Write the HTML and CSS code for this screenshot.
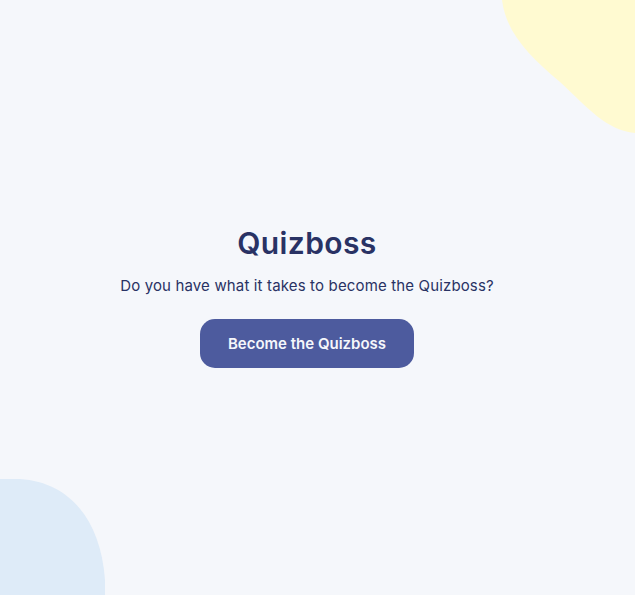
FILE: index.html
```html
<!DOCTYPE html>
<html lang="en">
<head>
<meta charset="utf-8">
<title>Quizboss</title>
<link rel="stylesheet" href="styles.css">
</head>
<body>
<svg class="blob blob-yellow" width="133" height="134" viewBox="502 0 133 134" aria-hidden="true">
  <path d="M502,0 C506,32 528,55 560,82 C588,108 606,130 635,133 L635,0 Z" fill="#FFFAD1"/>
</svg>
<svg class="blob blob-blue" width="106" height="116" viewBox="0 479 106 116" aria-hidden="true">
  <path d="M0,479 L15,479 C62,479 100,512 105,580 L105,595 L0,595 Z" fill="#DEEBF8"/>
</svg>
<main class="intro">
  <h1 class="intro-title">Quizboss</h1>
  <p class="intro-text">Do you have what it takes to become the Quizboss?</p>
  <button class="intro-button">Become the Quizboss</button>
</main>
</body>
</html>
```
FILE: styles.css
```css
* { box-sizing: border-box; }
html, body { height: 100%; }
body {
  margin: 0;
  background: #F5F7FB;
  font-family: "Inter", "Noto Sans", sans-serif;
  overflow: hidden;
  position: relative;
}
.blob { position: absolute; display: block; }
.blob-yellow { top: 0; right: 0; }
.blob-blue { bottom: 0; left: 0; }
.intro {
  position: relative;
  min-height: 100%;
  padding-right: 21px;
  padding-bottom: 2px;
  display: flex;
  flex-direction: column;
  align-items: center;
  justify-content: center;
  text-align: center;
}
.intro-title {
  margin: 0;
  font-size: 30px;
  font-weight: 600;
  color: #293264;
  letter-spacing: 0.4px;
  line-height: 36px;
}
.intro-text {
  margin: 15px 0 23px;
  font-size: 15px;
  color: #293264;
  letter-spacing: 0.15px;
  line-height: 20px;
}
.intro-button {
  width: 214px;
  height: 49px;
  border: none;
  border-radius: 15px;
  background: #4D5B9E;
  color: #F5F7FB;
  font-family: inherit;
  font-size: 15px;
  font-weight: 600;
  cursor: pointer;
}
```
